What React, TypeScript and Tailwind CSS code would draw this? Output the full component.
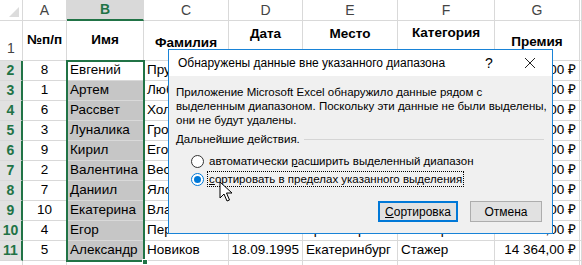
import React from "react";

const cols = ["A", "B", "C", "D", "E", "F", "G", ""];

const rows = [
  ["8", "Евгений", "Прудников", "12.03.1990", "Москва", "Менеджер", "25 000,00 ₽"],
  ["1", "Артем", "Любимов", "05.06.1988", "Казань", "Стажер", "15 000,00 ₽"],
  ["6", "Рассвет", "Холодов", "21.11.1992", "Самара", "Менеджер", "18 000,00 ₽"],
  ["3", "Луналика", "Громова", "14.02.1991", "Омск", "Стажер", "12 000,00 ₽"],
  ["9", "Кирил", "Егоров", "30.08.1989", "Пермь", "Менеджер", "21 000,00 ₽"],
  ["2", "Валентина", "Веселова", "17.04.1993", "Томск", "Стажер", "13 000,00 ₽"],
  ["7", "Даниил", "Ялсов", "09.09.1990", "Тула", "Менеджер", "19 000,00 ₽"],
  ["10", "Екатерина", "Власова", "02.12.1994", "Сочи", "Стажер", "16 000,00 ₽"],
  ["4", "Егор", "Перепечкин", "23.07.1991", "Красноярск", "Стажер", "23 550,00 ₽"],
  ["5", "Александр", "Новиков", "18.09.1995", "Екатеринбург", "Стажер", "14 364,00 ₽"],
];

const cell = "border-r border-b border-[#d9d9d9] overflow-hidden whitespace-nowrap";

function Cursor() {
  return (
    <svg width="14" height="22" viewBox="0 0 14 22" className="absolute left-[219px] top-[181px]">
      <path d="M1 1 L1 17 L5 13 L8 20 L10.5 19 L7.5 12 L13 12 Z" fill="#fff" stroke="#000" strokeWidth="1" strokeLinejoin="round" />
    </svg>
  );
}

function Dialog() {
  return (
    <div className="absolute left-[168px] top-[49px] w-[385px] h-[185px] border border-[#1883d7] bg-[#f0f0f0] font-['Liberation_Sans',sans-serif] text-[11.5px] text-black whitespace-nowrap">
      <div className="h-[26px] bg-white flex items-center pl-[9px]">
        <span className="flex-1 text-[12px]">Обнаружены данные вне указанного диапазона</span>
        <span className="w-[20px] text-center text-[14px] mr-[25px]">?</span>
        <svg width="12" height="12" viewBox="0 0 12 12" className="mr-[16px]">
          <path d="M1 1 L11 11 M11 1 L1 11" stroke="#222" strokeWidth="1" />
        </svg>
      </div>
      <div className="pl-[7px] pr-[8px] pt-[9px] leading-[14px]">
        <p>
          Приложение Microsoft Excel обнаружило данные рядом с<br />
          выделенным диапазоном. Поскольку эти данные не были выделены,<br />
          они не будут удалены.
        </p>
        <div className="flex items-center gap-[4px] mt-[5px]">
          <span>Дальнейшие действия.</span>
          <div className="flex-1 h-px bg-[#d5d5d5]" />
        </div>
        <div className="mt-[8px] ml-[15px] flex flex-col gap-[4px]">
          <label className="flex items-center gap-[5px] h-[14px]">
            <span className="w-[13px] h-[13px] rounded-full border border-[#333] bg-white" />
            <span>
              автоматически <span className="underline">р</span>асширить выделенный диапазон
            </span>
          </label>
          <label className="flex items-center gap-[3px] h-[14px]">
            <span className="w-[13px] h-[13px] rounded-full border border-[#0078d7] bg-white flex items-center justify-center">
              <span className="w-[7px] h-[7px] rounded-full bg-[#0078d7]" />
            </span>
            <span className="border border-dotted border-black px-[1px] leading-[14px]">
              <span className="underline">с</span>ортировать в пределах указанного выделения
            </span>
          </label>
        </div>
        <div className="flex justify-end gap-[12px] mt-[15px] mr-[2px]">
          <button className="w-[80px] h-[21px] border-2 border-[#0078d7] bg-[#e1e1e1] text-[12px]">
            <span className="underline">С</span>ортировка
          </button>
          <button className="w-[72px] h-[21px] border border-[#adadad] bg-[#e1e1e1] text-[12px]">Отмена</button>
        </div>
      </div>
    </div>
  );
}

export default function App() {
  return (
    <div className="relative w-[582px] h-[265px] overflow-hidden bg-white font-['Liberation_Sans',sans-serif] text-[13.5px] text-black">
      <div className="grid grid-cols-[23px_44px_77px_85px_74px_95px_97px_85px_1fr] grid-rows-[21px_40px_repeat(11,20px)]">
        {/* header row */}
        <div className={`${cell} relative`}>
          <svg width="10" height="10" className="absolute right-[3px] bottom-[3px]">
            <path d="M10 0 L10 10 L0 10 Z" fill="#dcdcdc" />
          </svg>
        </div>
        {cols.map((c) =>
          c === "B" ? (
            <div key={c} className={`${cell} bg-[#d9d9d9] border-b-2 border-b-[#217346] flex items-center justify-center text-[#217346] font-bold text-[14px]`}>
              {c}
            </div>
          ) : (
            <div key={c || "x"} className={`${cell} flex items-center justify-center text-[#444] text-[14px]`}>
              {c}
            </div>
          )
        )}

        {/* row 1 */}
        <div className={`${cell} flex items-end justify-center pb-[1px] text-[#444] text-[14px]`}>1</div>
        <div className={`${cell} flex items-center justify-center font-bold`}>№п/п</div>
        <div className={`${cell} flex items-center justify-center font-bold`}>Имя</div>
        <div className={`${cell} flex items-center justify-center pt-[6px] font-bold`}>Фамилия</div>
        <div className={`${cell} flex items-start justify-center pt-[3px] font-bold`}>Дата</div>
        <div className={`${cell} flex items-start justify-center pt-[3px] font-bold`}>Место</div>
        <div className={`${cell} flex items-start justify-center pt-[2px] font-bold`}>Категория</div>
        <div className={`${cell} flex items-center justify-center pt-[3px] font-bold`}>Премия</div>
        <div className={cell} />

        {rows.map((r, i) => (
          <React.Fragment key={i}>
            <div className={`${cell} border-r-2 border-r-[#217346] bg-[#e1e1e1] flex items-center justify-center text-[#217346] font-bold text-[14px]`}>
              {i + 2}
            </div>
            <div className={`${cell} flex items-center justify-center`}>{r[0]}</div>
            <div className={`${cell} flex items-center pl-[3px] ${i === 0 ? "" : "bg-[#c6c6c6]"}`}>{r[1]}</div>
            <div className={`${cell} flex items-center pl-[3px]`}>{r[2]}</div>
            <div className={`${cell} flex items-center justify-end pr-[3px]`}>{r[3]}</div>
            <div className={`${cell} flex items-center pl-[3px]`}>{r[4]}</div>
            <div className={`${cell} flex items-center pl-[3px]`}>{r[5]}</div>
            <div className={`${cell} flex items-center justify-end pr-[3px]`}>{r[6]}</div>
            <div className={cell} />
          </React.Fragment>
        ))}
        {Array.from({ length: 9 }).map((_, i) => (
          <div key={`e${i}`} className={cell} />
        ))}
      </div>

      {/* selection B2:B11 */}
      <div className="absolute left-[66px] top-[60px] w-[79px] h-[202px] border-2 border-[#217346] pointer-events-none" />
      <div className="absolute left-[142px] top-[259px] w-[6px] h-[6px] bg-[#217346] border border-white" />

      <Dialog />
      <Cursor />
    </div>
  );
}
